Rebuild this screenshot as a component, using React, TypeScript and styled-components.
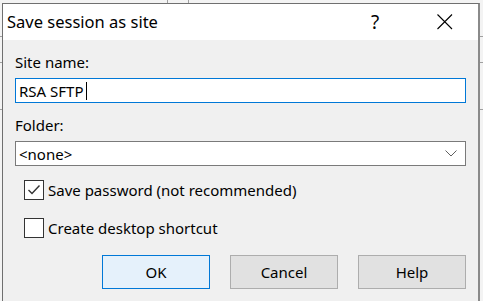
import * as React from 'react'
import styled, { createGlobalStyle } from 'styled-components'

const GlobalStyle = createGlobalStyle`
  html, body {
    margin: 0;
    padding: 0;
  }
  body {
    width: 483px;
    height: 301px;
    overflow: hidden;
    background-color: #f3f3f3;
    background-image:
      linear-gradient(#a0a0a0, #a0a0a0),
      linear-gradient(#a0a0a0, #a0a0a0),
      linear-gradient(#a0a0a0, #a0a0a0),
      linear-gradient(#a0a0a0, #a0a0a0),
      linear-gradient(#a0a0a0, #a0a0a0);
    background-repeat: no-repeat;
    background-size: 100% 1px, 100% 1px, 100% 1px, 1px 100%, 1px 100%;
    background-position: 0 36px, 0 62px, 0 109px, 167px 0, 188px 0;
    font-family: 'Segoe UI', 'Noto Sans', sans-serif;
    color: #000;
  }
`

export default function App() {
  return (
    <>
      <GlobalStyle />
      <Dialog>
        <TitleBar>
          <Title>Save session as site</Title>
          <CaptionButton>?</CaptionButton>
          <CaptionButton $close>
            <svg width="16" height="16" viewBox="0 0 16 16">
              <path d="M0.5 0.5 L15 15 M15 0.5 L0.5 15" stroke="#000" strokeWidth="1.1" fill="none" />
            </svg>
          </CaptionButton>
        </TitleBar>
        <Body>
          <Label>Site name:</Label>
          <TextField $focused>
            RSA SFTP
            <Caret />
          </TextField>
          <Label $gap={12}>Folder:</Label>
          <TextField>
            <span>&lt;none&gt;</span>
            <Chevron width="12" height="7" viewBox="0 0 12 7">
              <path d="M0.5 0.5 L6 6 L11.5 0.5" stroke="#606060" strokeWidth="1" fill="none" />
            </Chevron>
          </TextField>
          <CheckRow $gap={14}>
            <Box>
              <svg width="18" height="18" viewBox="0 0 18 18">
                <path d="M3.5 9 L7 12.5 L14.5 4.5" stroke="#333" strokeWidth="1.4" fill="none" />
              </svg>
            </Box>
            Save password (not recommended)
          </CheckRow>
          <CheckRow $gap={18}>
            <Box />
            Create desktop shortcut
          </CheckRow>
          <Buttons>
            <Button $default>OK</Button>
            <Button>Cancel</Button>
            <Button>Help</Button>
          </Buttons>
        </Body>
      </Dialog>
    </>
  )
}

const Dialog = styled.div`
  box-sizing: border-box;
  width: 478px;
  height: 310px;
  margin: 3px 0 0 2px;
  border: 1px solid #6f6f6f;
  border-right: 2px solid #8a8a8a;
  background: #f0f0f0;
  display: flex;
  flex-direction: column;
`

const TitleBar = styled.div`
  height: 36px;
  background: #fff;
  display: flex;
  align-items: center;
`

const Title = styled.div`
  flex: 1;
  padding-left: 4px;
  font-size: 16.5px;
  line-height: 20px;
`

const CaptionButton = styled.div<{ $close?: boolean }>`
  width: 66px;
  height: 36px;
  display: flex;
  align-items: center;
  justify-content: center;
  font-size: 19px;
  margin-right: ${(p) => (p.$close ? '0' : '4px')};
`

const Body = styled.div`
  display: flex;
  flex-direction: column;
  padding: 12px 12px 0 12px;
  font-size: 15px;
`

const Label = styled.div<{ $gap?: number }>`
  line-height: 20px;
  margin-top: ${(p) => p.$gap ?? 0}px;
`

const TextField = styled.div<{ $focused?: boolean }>`
  box-sizing: border-box;
  height: 25px;
  margin-top: 6px;
  padding: 0 8px 0 3px;
  background: #fff;
  border: 1px solid ${(p) => (p.$focused ? '#0078d7' : '#7a7a7a')};
  display: flex;
  align-items: center;
  line-height: 20px;
`

const Caret = styled.span`
  display: inline-block;
  width: 1px;
  height: 18px;
  margin-left: 2px;
  background: #000;
`

const Chevron = styled.svg`
  margin-left: auto;
`

const CheckRow = styled.div<{ $gap: number }>`
  display: flex;
  align-items: center;
  gap: 4px;
  height: 20px;
  margin-top: ${(p) => p.$gap}px;
  padding-left: 9px;
  line-height: 20px;
`

const Box = styled.span`
  box-sizing: border-box;
  width: 20px;
  height: 20px;
  border: 1px solid #333;
  background: #fff;
  display: flex;
  align-items: center;
  justify-content: center;
`

const Buttons = styled.div`
  display: flex;
  justify-content: flex-end;
  gap: 20px;
  margin-top: 17px;
`

const Button = styled.button<{ $default?: boolean }>`
  box-sizing: border-box;
  width: 108px;
  height: 34px;
  padding: 0;
  font-family: inherit;
  font-size: 15px;
  color: #000;
  background: ${(p) => (p.$default ? '#e5f1fb' : '#e1e1e1')};
  border: 1px solid ${(p) => (p.$default ? '#0078d7' : '#adadad')};
  border-radius: 0;
`
